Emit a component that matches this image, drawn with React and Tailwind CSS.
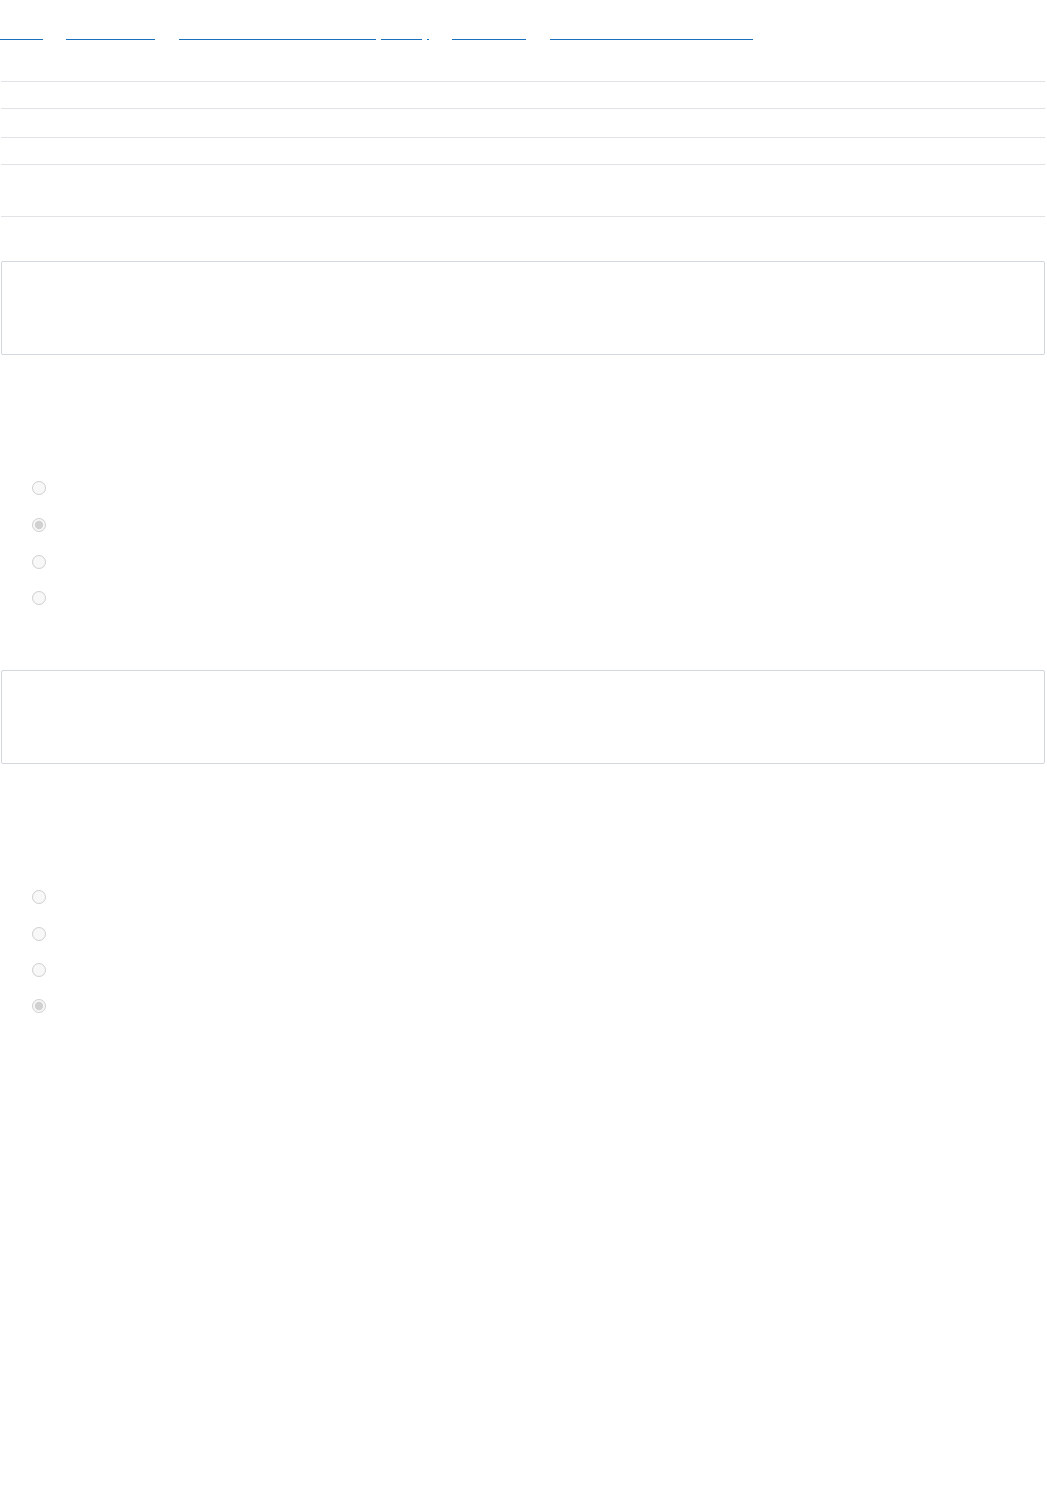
import React from "react";

const font = { fontFamily: '"Liberation Sans", Arial, sans-serif' };

function Radio({ checked, top, name }) {
  return (
    <div className="flex pl-[32px]" style={{ marginTop: top }}>
      <input
        type="radio"
        name={name}
        disabled
        defaultChecked={checked}
        className="m-0 w-[14px] h-[14px] block"
      />
      <span className="ml-2 text-white text-sm leading-[14px]">Option</span>
    </div>
  );
}

export default function App() {
  return (
    <div className="bg-white min-h-[1500px] text-white" style={font}>
      <nav className="pt-[24px] flex text-sm">
        <a className="block w-[43px] h-[16px] border-b border-[#1a70bb] overflow-hidden whitespace-nowrap text-white leading-[15px]">Home</a>
        <a className="block ml-[23px] w-[89px] h-[16px] border-b border-[#1a70bb] overflow-hidden whitespace-nowrap text-white leading-[15px]">Categories</a>
        <a className="flex ml-[24px] h-[16px] overflow-hidden whitespace-nowrap text-white leading-[15px]">
          <span className="block w-[197px] h-[16px] border-b border-[#1a70bb]">Knowledge base articles</span>
          <span className="block w-[5px]"></span>
          <span className="block w-[41px] h-[16px] border-b border-[#1a70bb]">page</span>
          <span className="block w-[5px]"></span>
          <span className="block w-[2px] h-[16px] border-b border-[#1a70bb]"></span>
        </a>
        <a className="block ml-[23px] w-[74px] h-[16px] border-b border-[#1a70bb] overflow-hidden whitespace-nowrap text-white leading-[15px]">Section</a>
        <a className="block ml-[24px] w-[203px] h-[16px] border-b border-[#1a70bb] overflow-hidden whitespace-nowrap text-white leading-[15px]">Current document title</a>
      </nav>

      <div className="ml-[1px] w-[1044px] mt-[41px] text-sm">
        <div className="h-[27px] border-t border-[#e1e2e6]">Author</div>
        <div className="h-[29px] border-t border-[#e1e2e6]">Date</div>
        <div className="h-[27px] border-t border-[#e1e2e6]">Category</div>
        <div className="h-[53px] border-t border-b border-[#e1e2e6]">Description</div>

        <div className="mt-[44px] h-[94px] border border-[#d3d8df] rounded-[2px]"></div>
      </div>

      <div>
        <Radio name="q1" top={126} />
        <Radio name="q1" top={23} checked />
        <Radio name="q1" top={23} />
        <Radio name="q1" top={22} />
      </div>

      <div className="ml-[1px] w-[1044px] mt-[65px] h-[94px] border border-[#d3d8df] rounded-[2px]"></div>

      <div>
        <Radio name="q2" top={126} />
        <Radio name="q2" top={23} />
        <Radio name="q2" top={22} />
        <Radio name="q2" top={22} checked />
      </div>
    </div>
  );
}
